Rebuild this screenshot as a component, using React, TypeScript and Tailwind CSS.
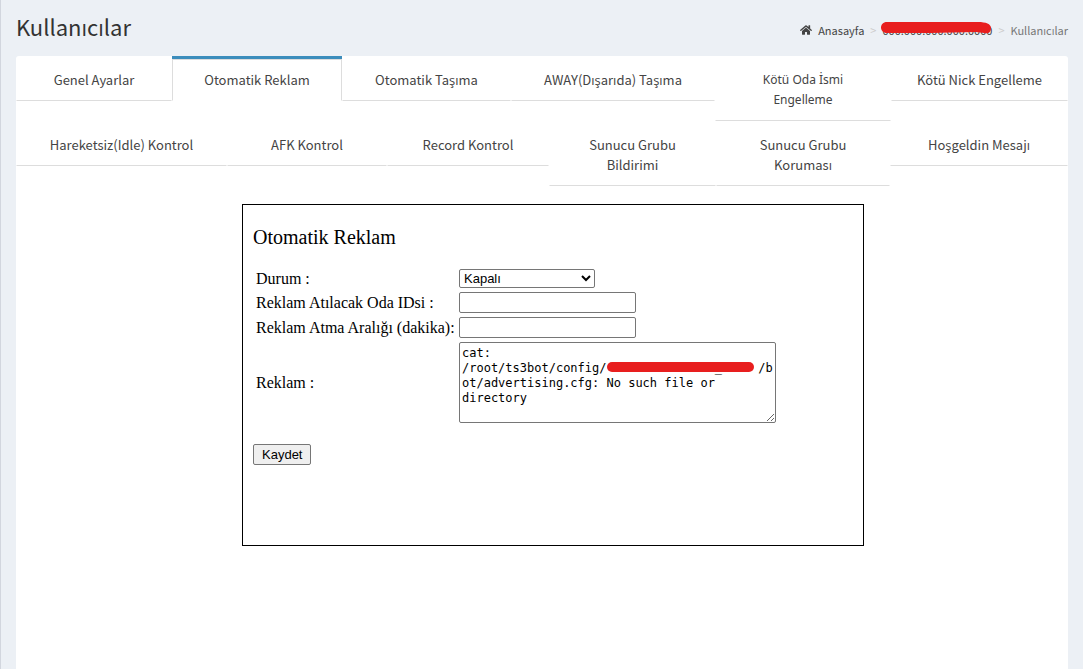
import { FaHome } from 'react-icons/fa'

const field = 'rounded-[2px] border border-[#767676] bg-white'

const hiddenPath = '\u00a0'.repeat(15) + '_' + '\u00a0'.repeat(5)
const message = `cat: /root/ts3bot/config/${hiddenPath}/bot/advertising.cfg: No such file or directory`

function Tab({ label, active = false, font = '' }: { label: string; active?: boolean; font?: string }) {
    return (
        <li className={active ? 'border-t-3 border-[#3c8dbc]' : 'border-t-3 border-transparent'}>
            <a
                href="#"
                className={
                    active
                        ? 'block border border-[#ddd] border-b-transparent px-5 py-[10px] text-center'
                        : `block rounded-t border border-transparent border-b-[#ddd] px-5 py-[10px] text-center ${font}`
                }
            >
                {label}
            </a>
        </li>
    )
}

function Header() {
    return (
        <header className="flex items-center justify-between px-[15px] pt-3 pb-4">
            <h1 className="text-[22px] leading-7 text-[#333]">Kullanıcılar</h1>
            <nav className="flex items-center pt-2 text-[11px] leading-5 text-[#444]">
                <a href="#" className="flex items-center gap-[6px]">
                    <FaHome size={12} />
                    Anasayfa
                </a>
                <span className="px-[6px] text-[#ccc]">&gt;</span>
                <a href="#" className="relative">
                    000.000.000.000:0000
                    <svg className="absolute top-[1px] -left-[2px] h-4 w-[112px]" viewBox="0 0 112 16" preserveAspectRatio="none">
                        <path d="M7 1H98C106 1 111 3 111 7S109 13 104 12L96 11L50 12L7 12C-1 12 -1 1 7 1Z" fill="#e81e1e" />
                    </svg>
                </a>
                <span className="px-[6px] text-[#ccc]">&gt;</span>
                <span className="text-[#777]">Kullanıcılar</span>
            </nav>
        </header>
    )
}

function AdForm() {
    return (
        <form className="mx-auto h-[342px] w-[622px] border border-black px-[10px] pt-5 font-['Liberation_Serif',serif] text-base leading-[19px] text-black">
            <h2 className="text-xl leading-6">Otomatik Reklam</h2>
            <div className="mt-5 grid grid-cols-[203px_1fr] items-center justify-items-start gap-y-1 pl-[3px]">
                <label htmlFor="durum">Durum :</label>
                <select id="durum" className={`${field} h-[19px] w-[136px] font-['Liberation_Sans',sans-serif] text-[13px]`}>
                    <option>Kapalı</option>
                    <option>Açık</option>
                </select>
                <label htmlFor="oda">Reklam Atılacak Oda IDsi :</label>
                <input id="oda" type="text" className={`${field} h-[21px] w-[177px] px-[2px] font-['Liberation_Sans',sans-serif] text-[13px]`} />
                <label htmlFor="aralik">Reklam Atma Aralığı (dakika):</label>
                <input id="aralik" type="text" className={`${field} h-[21px] w-[177px] px-[2px] font-['Liberation_Sans',sans-serif] text-[13px]`} />
                <label htmlFor="reklam">Reklam :</label>
                <div className="relative">
                    <textarea
                        id="reklam"
                        defaultValue={message}
                        spellCheck={false}
                        className={`${field} block h-[81px] w-[317px] px-[2px] pt-[3px] font-['DejaVu_Sans_Mono',monospace] text-xs leading-[15px]`}
                    />
                    <svg className="pointer-events-none absolute top-5 left-[148px] h-[10px] w-[147px]" viewBox="0 0 147 10">
                        <rect width="147" height="10" rx="5" fill="#e81e1e" />
                    </svg>
                </div>
            </div>
            <button type="button" className="mt-[21px] h-[21px] rounded-[2px] border border-[#767676] bg-[#efefef] px-2 font-['Liberation_Sans',sans-serif] text-[13px] leading-[19px]">
                Kaydet
            </button>
        </form>
    )
}

export default function App() {
    return (
        <div className="flex min-h-screen flex-col border-l border-[#d2d6de] bg-[#ecf0f5] font-['Noto_Sans_CJK_SC','Open_Sans',sans-serif]">
            <Header />
            <main className="mx-[15px] flex-1 rounded-t-[3px] bg-white text-[13px] leading-5 text-[#444]">
                <ul className="grid grid-cols-[156fr_170fr_169fr_204fr_176fr_177fr] items-start">
                    <Tab label="Genel Ayarlar" />
                    <Tab label="Otomatik Reklam" active />
                    <Tab label="Otomatik Taşıma" />
                    <Tab label="AWAY(Dışarıda) Taşıma" />
                    {/* the CJK face has no dotted capital I */}
                    <Tab label="Kötü Oda İsmi Engelleme" font="font-['Noto_Sans',sans-serif] text-xs leading-5" />
                    <Tab label="Kötü Nick Engelleme" />
                </ul>
                <ul className="grid grid-cols-[211fr_160fr_162fr_167fr_174fr_178fr] items-start">
                    <Tab label="Hareketsiz(Idle) Kontrol" />
                    <Tab label="AFK Kontrol" />
                    <Tab label="Record Kontrol" />
                    <Tab label="Sunucu Grubu Bildirimi" />
                    <Tab label="Sunucu Grubu Koruması" />
                    <Tab label="Hoşgeldin Mesajı" />
                </ul>
                <div className="pt-[18px] pl-[22px]">
                    <AdForm />
                </div>
            </main>
        </div>
    )
}
